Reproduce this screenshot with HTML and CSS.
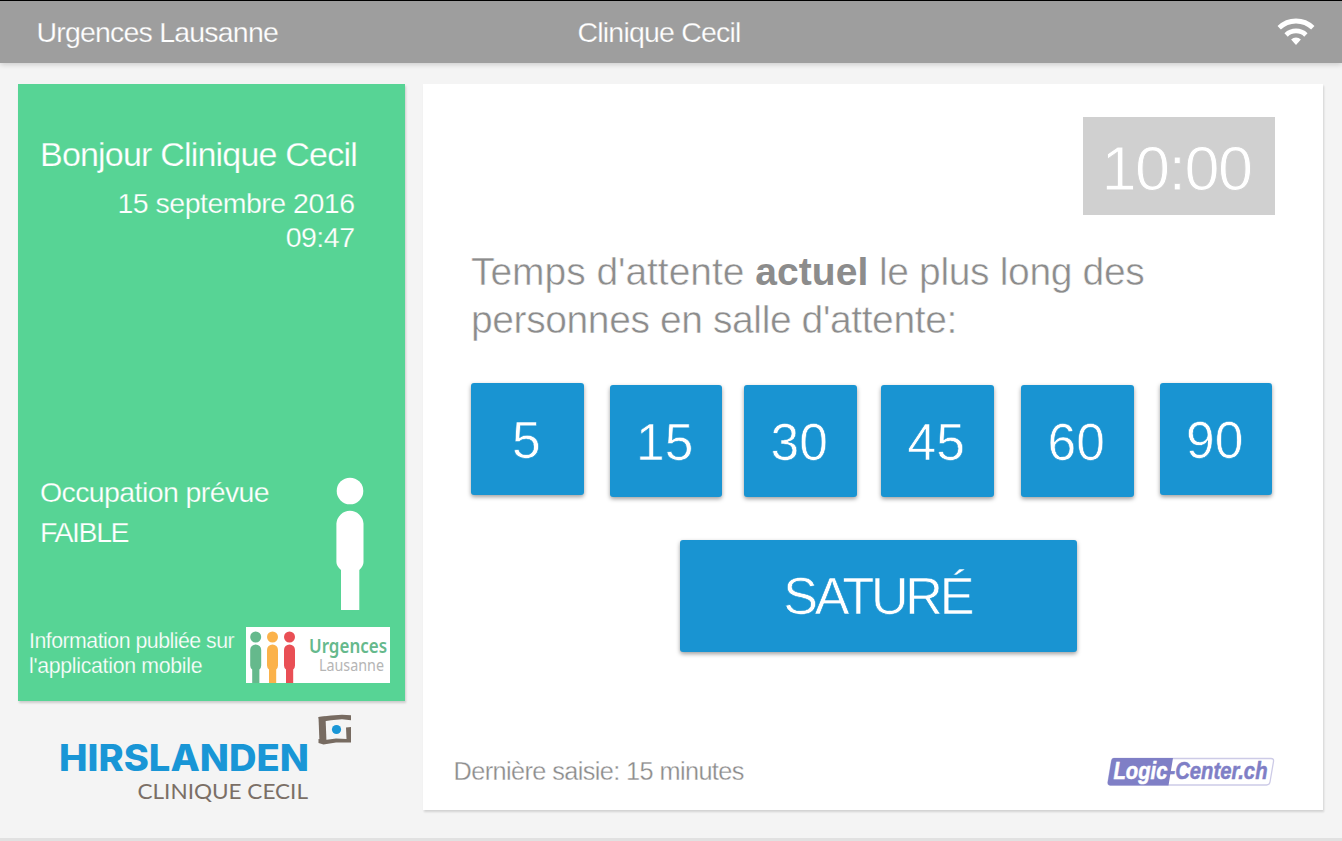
FILE: index.html
```html
<!DOCTYPE html>
<html lang="fr">
<head>
<meta charset="utf-8">
<title>Urgences Lausanne</title>
<link rel="stylesheet" href="styles.css">
</head>
<body>
<header class="topbar">
  <span class="topbar-app">Urgences Lausanne</span>
  <span class="topbar-site">Clinique Cecil</span>
  <svg class="wifi" width="38" height="28" viewBox="0 0 38 28">
    <path d="M2.2 9.8A24.2 24.2 0 0 1 35.8 9.8M9.1 16.9A14.3 14.3 0 0 1 28.9 16.9" fill="none" stroke="#fff" stroke-width="4.8"/>
    <path d="M14.1 21.600A7 7 0 0 1 23.9 21.600L19 27Z" fill="#fff"/>
  </svg>
</header>
<main class="layout">
  <aside class="side">
    <section class="status">
      <h1 class="greeting">Bonjour Clinique Cecil</h1>
      <div class="date">15 septembre 2016</div>
      <div class="time">09:47</div>
      <div class="forecast">
        <div class="forecast-text">
          <div class="forecast-label">Occupation prévue</div>
          <div class="forecast-level">FAIBLE</div>
        </div>
        <svg class="person" width="28" height="134" viewBox="0 0 28 134">
          <circle cx="14" cy="14" r="13.3" fill="#fff"/>
          <path d="M.4 46.500A13.600 14 0 0 1 27.500 46.500V85Q27.500 89 23.300 93V133H5V93Q.4 89 .4 85Z" fill="#fff"/>
        </svg>
      </div>
      <div class="publish">
        <p class="publish-text">Information publiée sur<br><span class="publish-target">l'application mobile</span></p>
        <svg class="app-logo" width="144" height="56" viewBox="0 0 144 56">
          <defs>
            <g id="figure">
              <circle cx="5.500" cy="5.500" r="5.500"/>
              <path d="M0 18.500A5.500 5.500 0 0 1 11 18.500V34Q11 36.500 9.200 38V51.500H2V38Q0 36.500 0 34Z"/>
            </g>
          </defs>
          <rect width="144" height="56" fill="#fff"/>
          <use href="#figure" x="4.200" y="4.500" fill="#65b98c"/>
          <use href="#figure" x="21" y="4.500" fill="#fbb24a"/>
          <use href="#figure" x="38" y="4.500" fill="#e94f55"/>
          <text class="app-name" x="63" y="26" textLength="78" lengthAdjust="spacingAndGlyphs">Urgences</text>
          <text class="app-city" x="73" y="43.500" textLength="65" lengthAdjust="spacingAndGlyphs">Lausanne</text>
        </svg>
      </div>
    </section>
    <svg class="clinic-logo" width="300" height="92" viewBox="0 0 300 92">
      <text class="clinic-name" x="-1" y="60" textLength="250" lengthAdjust="spacingAndGlyphs">HIRSLANDEN</text>
      <text class="clinic-site" x="77.500" y="88" textLength="170.500" lengthAdjust="spacingAndGlyphs">CLINIQUE CECIL</text>
      <g fill="#776b61">
        <path d="M258.500 6L265.500 5.500L266.500 31L259.500 32Z"/>
        <path d="M258.500 6L271 4.500L282 3.800L291 4.300V9.300L282 8.300L271 9.300L259.500 11Z"/>
        <path d="M286 16.500L291 16V31.500L276 31.500L263.500 33.500L258.500 32V28L265 29L276 27.500L286.500 28Z"/>
      </g>
      <circle cx="276.500" cy="18.500" r="4.600" fill="#1996d6"/>
    </svg>
  </aside>
  <section class="panel">
    <div class="countdown">10:00</div>
    <h2 class="question"><span class="q-part q-a">Temps d'attente </span><b>actuel</b><span class="q-part q-b"> le plus long des</span><br><span class="q-part q-c">personnes en salle d'attente:</span></h2>
    <div class="choices">
      <button class="choice">5</button>
      <button class="choice">15</button>
      <button class="choice">30</button>
      <button class="choice">45</button>
      <button class="choice">60</button>
      <button class="choice">90</button>
    </div>
    <button class="full">SATURÉ</button>
    <footer class="panel-foot">
      <span class="last-entry">Dernière saisie: 15 minutes</span>
      <svg class="vendor" width="168" height="30" viewBox="0 0 168 30">
        <path d="M7 1.500H164Q167 1.500 166.500 4.500L163 25Q162.500 28 159.500 28H3Q.5 28 1 25L4.500 4Q5 1.500 7 1.500Z" fill="#fff" stroke="#cdcbe7" stroke-width="1.300"/>
        <path d="M7 1H66L61.500 28.500H3Q.3 28.500 .8 25L4.300 4Q4.800 1 7 1Z" fill="#7f7fc6"/>
        <text class="vendor-name" x="6.500" y="22" fill="#fff" stroke="#fff" textLength="54" lengthAdjust="spacingAndGlyphs">Logic</text>
        <text class="vendor-name" x="61.500" y="22" fill="#7f7fc6" stroke="#7f7fc6" textLength="99" lengthAdjust="spacingAndGlyphs">-Center.ch</text>
      </svg>
    </footer>
  </section>
</main>
</body>
</html>
```

FILE: styles.css
```css
* { box-sizing: border-box; }
body {
  margin: 0;
  height: 841px;
  overflow: hidden;
  display: flex;
  flex-direction: column;
  background: #f4f4f4;
  border-bottom: 3px solid #e1e1e1;
  font-family: "Liberation Sans", Arial, sans-serif;
  color: #fff;
}
svg { overflow: visible; }
.topbar {
  height: 63px;
  flex: none;
  display: grid;
  grid-template-columns: 541px 1fr auto;
  align-items: center;
  padding: 0 27.500px 0 36.500px;
  border-top: 1px solid #000;
  background: #9e9e9e;
  box-shadow: 0 1px 6px rgba(0,0,0,.2);
  font-size: 28.500px;
  letter-spacing: -.8px;
  -webkit-text-stroke: .25px #9e9e9e;
}
.layout {
  flex: 1;
  display: flex;
  gap: 18px;
  padding: 21px 19px 0 18px;
}
.side { width: 386.500px; flex: none; }
.status {
  height: 617px;
  background: #57d495;
  box-shadow: 1px 2px 2px rgba(0,0,0,.16);
  padding-top: 50px;
  -webkit-text-stroke: .25px #57d495;
}
.greeting {
  margin: 0 0 0 22px;
  font-size: 34px;
  font-weight: 400;
  line-height: 40px;
  letter-spacing: -.8px;
}
.date, .time {
  padding-right: 50px;
  text-align: right;
  font-size: 28.500px;
  line-height: 34px;
  letter-spacing: -.5px;
}
.date { margin-top: 12px; }
.forecast {
  display: flex;
  justify-content: space-between;
  margin-top: 218px;
  padding: 0 41px 0 22px;
  font-size: 28.500px;
  line-height: 40px;
}
.forecast-label { letter-spacing: -.6px; }
.forecast-level { letter-spacing: -1.400px; }
.person { margin-top: 5px; }
.publish {
  display: flex;
  justify-content: space-between;
  padding: 0 14.500px 0 11px;
  margin-top: 16px;
}
.publish-text {
  margin: 2px 0 0;
  font-size: 21.300px;
  line-height: 25px;
  letter-spacing: -.5px;
  white-space: nowrap;
}
.publish-target { letter-spacing: -.300px; }
.app-logo { -webkit-text-stroke: 0; }
.app-name { font: 600 19.500px "Noto Sans", sans-serif; fill: #65b98c; }
.app-city { font: 400 16px "Noto Sans", sans-serif; fill: #b5b5b5; }
.clinic-logo { display: block; margin: 10px 0 0 42px; }
.clinic-name { font: 800 36.500px Inter, sans-serif; fill: #1996d6; }
.clinic-site { font: 400 20.500px Lato, sans-serif; fill: #7b6f66; }
.panel {
  flex: 1;
  height: 726px;
  display: flex;
  flex-direction: column;
  background: #fff;
  box-shadow: 1px 2px 2px rgba(0,0,0,.14);
  padding: 33px 48px 0 48.500px;
  color: #8c8c8c;
}
.countdown {
  align-self: flex-end;
  width: 192px;
  height: 98px;
  background: #d0d0d0;
  color: #fff;
  text-align: center;
  font-size: 63px;
  line-height: 103px;
  letter-spacing: -1.500px;
  padding-right: 5px;
  -webkit-text-stroke: .9px #d0d0d0;
}
.question {
  margin: 33px 0 0;
  font-size: 39px;
  font-weight: 400;
  line-height: 48px;
  white-space: nowrap;
}
.question b { letter-spacing: .1px; }
.q-part { -webkit-text-stroke: .5px #fff; white-space: pre; }
.q-a { letter-spacing: -.050px; }
.q-b { letter-spacing: -.350px; }
.q-c { letter-spacing: -.4px; }
.choices { display: flex; margin-top: 39px; }
.choice, .full {
  flex: none;
  height: 112px;
  border: 0;
  border-radius: 3px;
  background: #1994d2;
  box-shadow: 0 2px 4px rgba(0,0,0,.38);
  color: #fff;
  font-family: inherit;
  font-size: 51.500px;
  padding: 1px 0 0;
  -webkit-text-stroke: .6px #1994d2;
}
.choice { width: 112.500px; margin: 2px 26px 0 0; padding-right: 2px; }
.choice:first-child { margin-top: 0; }
.choice:nth-child(2) { margin-right: 22px; }
.choice:nth-child(3) { margin-right: 24.500px; }
.choice:nth-child(4) { margin-right: 27.500px; }
.choice:last-child { margin: 0; }
.full {
  width: 396.500px;
  margin: 43px 0 0 209px;
  padding: 0 2px 0 0;
  font-size: 52px;
  letter-spacing: -3.200px;
}
.panel-foot {
  display: flex;
  justify-content: space-between;
  margin: 103px 0 0 -17.500px;
}
.last-entry {
  font-size: 25.300px;
  line-height: 32px;
  letter-spacing: -.6px;
  -webkit-text-stroke: .3px #fff;
}
.vendor { margin-top: 2px; }
.vendor-name { font: italic 700 23px "Liberation Sans", sans-serif; stroke-width: .5px; }
```
